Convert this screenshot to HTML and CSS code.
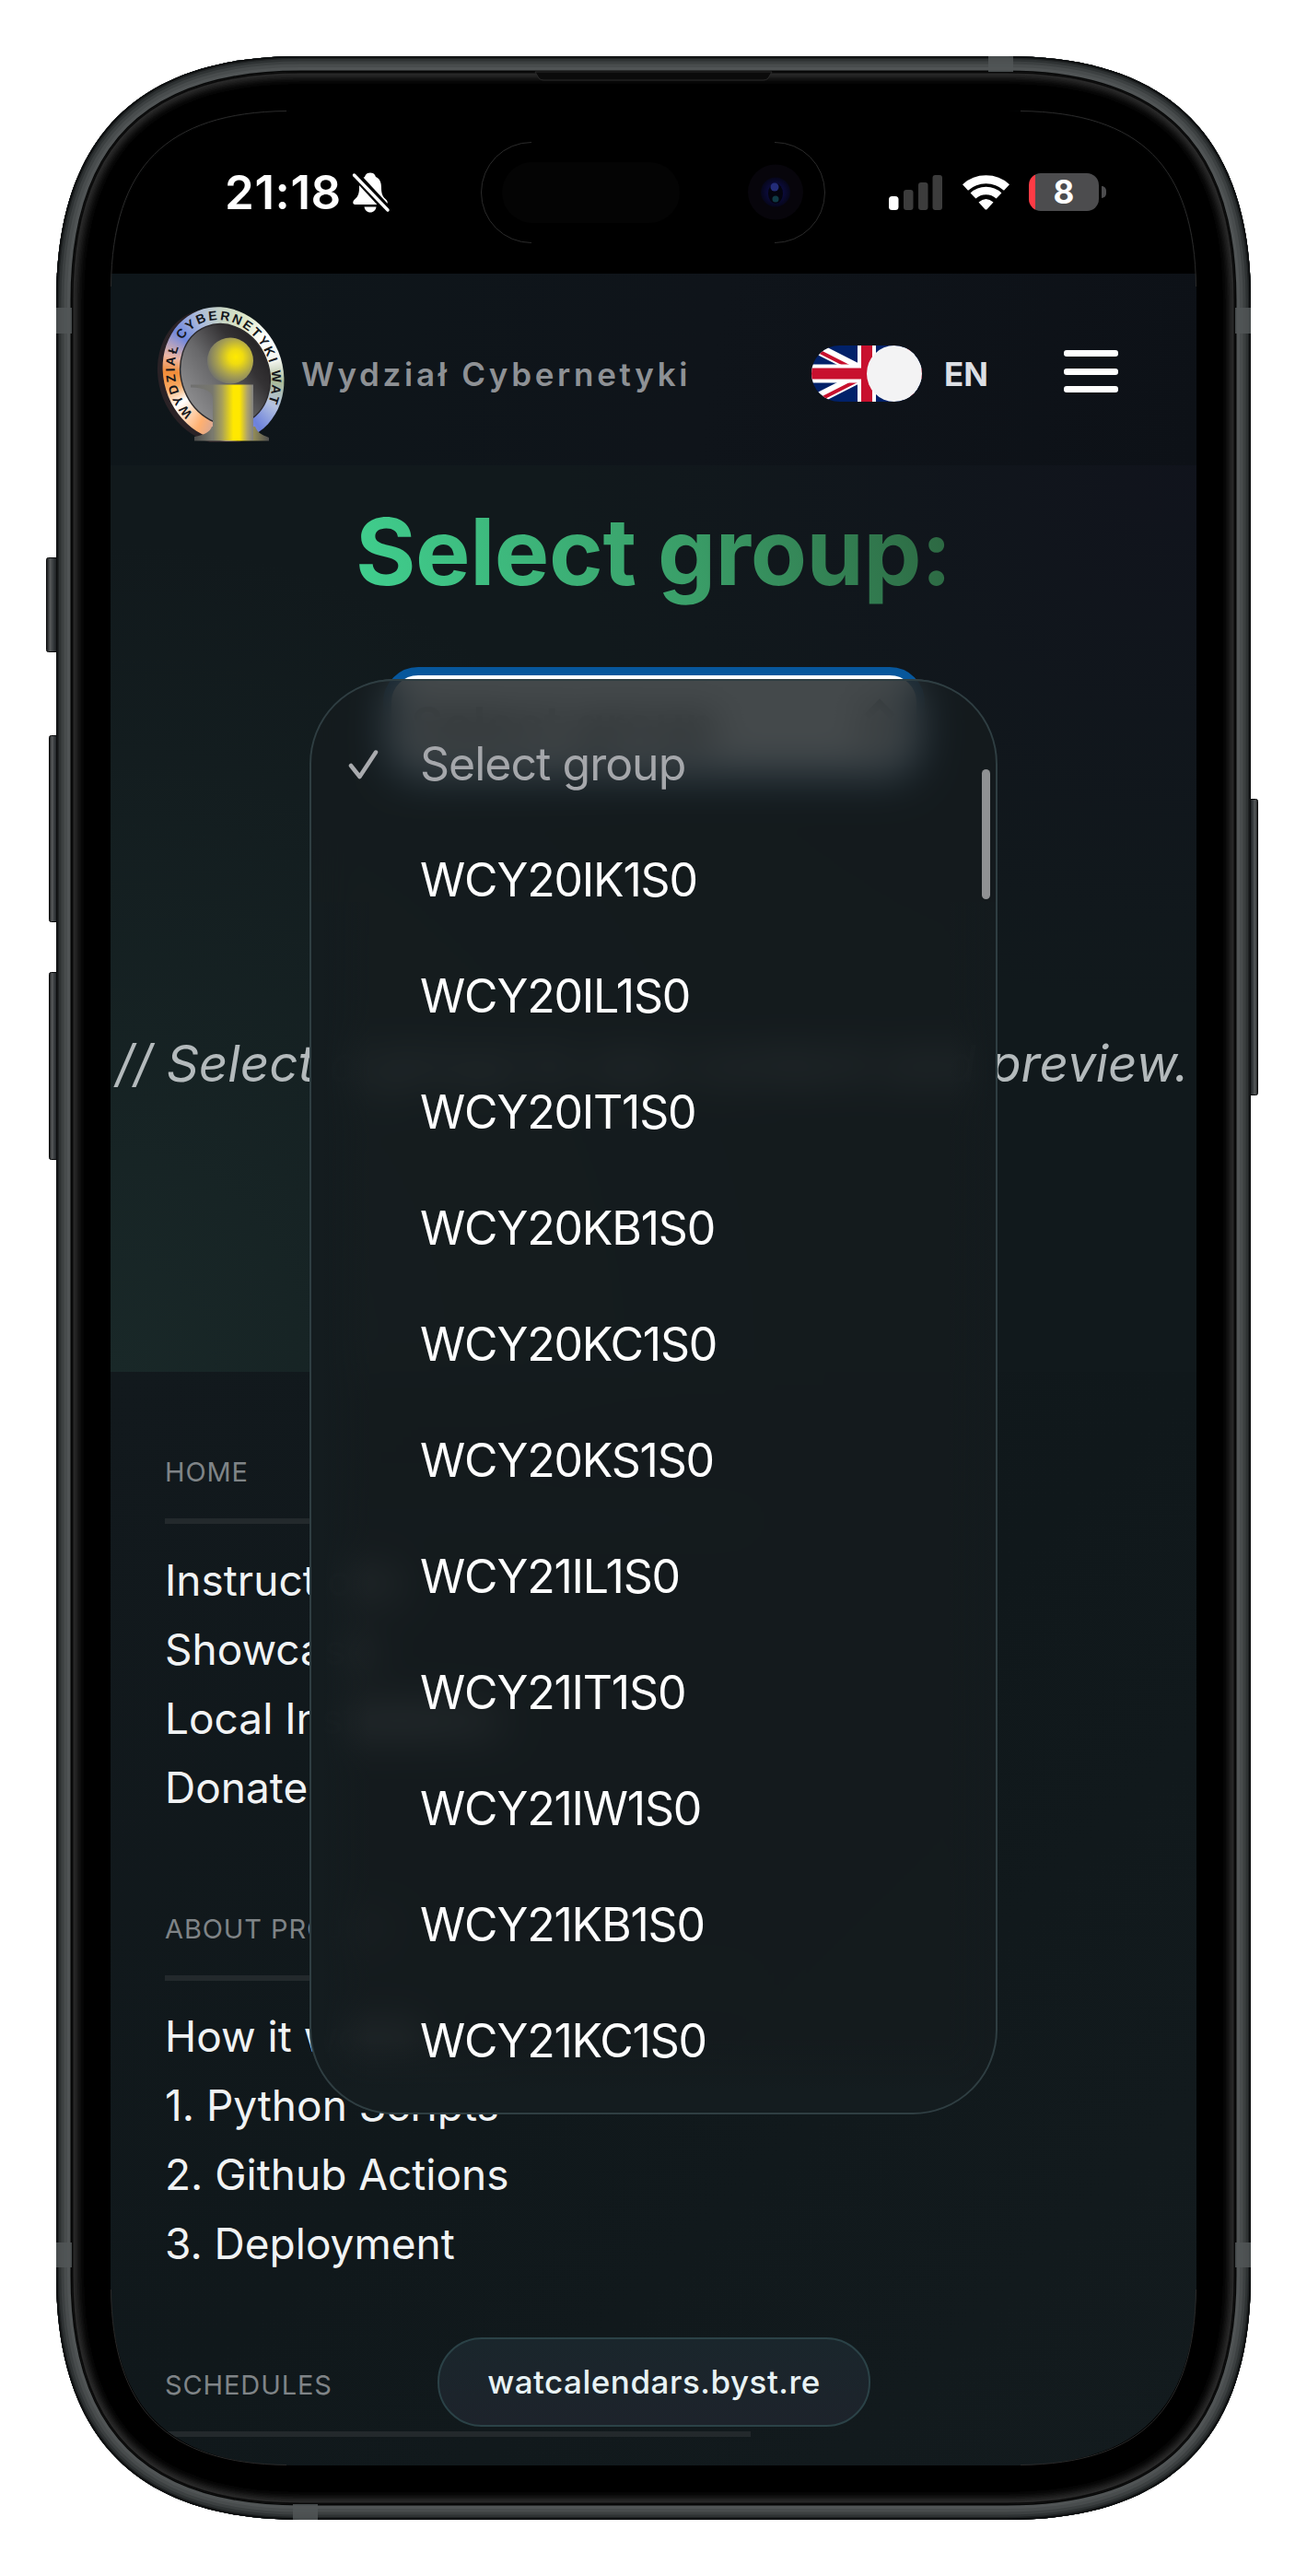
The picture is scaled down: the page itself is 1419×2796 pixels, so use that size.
FILE: index.html
```html
<!DOCTYPE html>
<html lang="en">
<head>
<meta charset="utf-8">
<title>WAT Calendars</title>
<link rel="stylesheet" href="styles.css">
</head>
<body>
<div class="phone">
  <svg class="frame" width="1297" height="2674" viewBox="0 0 1297 2674" aria-hidden="true">
    <defs>
      <path id="outer" d="M265,0H1032C1209,0 1297,88 1297,265V2409C1297,2586 1209,2674 1032,2674H265C88,2674 0,2586 0,2409V265C0,88 88,0 265,0Z"/>
      <path id="inner" d="M265,17H1032C1200,17 1280,97 1280,265V2409C1280,2577 1200,2657 1032,2657H265C97,2657 17,2577 17,2409V265C17,97 97,17 265,17Z"/>
      <clipPath id="outerClip"><use href="#outer"/></clipPath>
      <clipPath id="innerClip"><use href="#inner"/></clipPath>
      <filter id="soft" x="-5%" y="-5%" width="110%" height="110%"><feGaussianBlur stdDeviation="5"/></filter>
      <linearGradient id="btn" x1="0" x2="1" y1="0" y2="0">
        <stop offset="0" stop-color="#141617"/><stop offset=".3" stop-color="#56595a"/><stop offset=".6" stop-color="#33373a"/><stop offset="1" stop-color="#0d0f10"/>
      </linearGradient>
      <linearGradient id="btnR" x1="1" x2="0" y1="0" y2="0">
        <stop offset="0" stop-color="#141617"/><stop offset=".3" stop-color="#56595a"/><stop offset=".6" stop-color="#33373a"/><stop offset="1" stop-color="#0d0f10"/>
      </linearGradient>
      <radialGradient id="lens">
        <stop offset="0" stop-color="#10104a"/><stop offset=".6" stop-color="#0a0a35"/><stop offset="1" stop-color="#06061a"/>
      </radialGradient>
    </defs>
    <g stroke="#0a0b0c" stroke-width="1">
      <rect x="-10.5" y="544.5" width="13" height="102" rx="2" fill="url(#btn)"/>
      <rect x="-7.5" y="737.5" width="10" height="202" rx="2" fill="url(#btn)"/>
      <rect x="-7.5" y="994.5" width="10" height="203" rx="2" fill="url(#btn)"/>
      <rect x="1295" y="806.5" width="9.500" height="321" rx="2" fill="url(#btnR)"/>
    </g>
    <g clip-path="url(#outerClip)" fill="none">
      <use href="#outer" fill="#000" stroke="#060707" stroke-width="36"/>
      <use href="#outer" stroke="#505455" stroke-width="31"/>
      <use href="#outer" stroke="#484c4d" stroke-width="24"/>
      <use href="#outer" stroke="#3c4041" stroke-width="17"/>
      <use href="#outer" stroke="#2e3233" stroke-width="11"/>
      <use href="#outer" stroke="#1e2122" stroke-width="6"/>
      <use href="#outer" stroke="#0c0e0f" stroke-width="3"/>
      <g fill="#515657" opacity=".85">
        <rect x="1012" y="0" width="27" height="17"/>
        <rect x="257" y="2657" width="27" height="17"/>
        <rect x="0" y="273" width="17" height="28"/>
        <rect x="1280" y="273" width="17" height="28"/>
        <rect x="0" y="2373" width="17" height="27"/>
        <rect x="1280" y="2373" width="17" height="27"/>
      </g>
    </g>
    <g clip-path="url(#innerClip)">
      <use href="#inner" fill="#000"/>
      <use href="#inner" fill="none" stroke="#363636" stroke-width="12" filter="url(#soft)"/>
      <use href="#inner" fill="none" stroke="#0a0a0a" stroke-width="3"/>
    </g>
    <path d="M520,17L524,24Q526,26 529,26H768Q771,26 773,24L777,17Z" fill="#0b0b0b" stroke="#2a2a2a" stroke-width="1"/>
  </svg>

  <div class="screen">
    <div class="statusbar">
      <span class="time">21:18</span>
      <svg class="bell" width="42" height="44" viewBox="0 0 42 44" fill="#fff">
        <path d="M20,0.500C15.500,0.500 14.500,3.500 14,5C8.500,7.500 8,13 8,17C8,24 6,27 2.500,30C0.500,32 1,35 3.500,35H36.500C39,35 39.500,32 37.500,30C34,27 32,24 32,17C32,13 31.500,7.500 26,5C25.500,3.500 24.500,0.500 20,0.500Z"/>
        <path d="M13.500,37.500H26.500C26,41 23.500,43.500 20,43.500S14,41 13.500,37.500Z"/>
        <path d="M2.500,1.500L40,42" stroke="#000" stroke-width="9"/>
        <path d="M2.500,3L39,41" stroke="#fff" stroke-width="3.400" stroke-linecap="round"/>
      </svg>
      <div class="indicators">
        <svg width="58" height="38" viewBox="0 0 58 38">
          <rect x="0" y="23" width="10.500" height="15" rx="3.500" fill="#fff"/>
          <g fill="#3c3c3c"><rect x="16" y="16" width="10.500" height="22" rx="3"/><rect x="32" y="8" width="10.500" height="30" rx="3"/><rect x="47.500" y="0" width="10.500" height="38" rx="3"/></g>
        </svg>
        <svg class="wifi" width="51" height="38" viewBox="0 0 51 38" fill="none" stroke="#fff">
          <path d="M3,13.500A33.500,33.500 0 0 1 48,13.500" stroke-width="9"/>
          <path d="M11.500,22.500A20.500,20.500 0 0 1 39.500,22.500" stroke-width="8.500"/>
          <path d="M17.500,29.500Q25.500,22.500 33.500,29.500L26.500,37.200Q25.500,38 24.500,37.200Z" fill="#fff" stroke="none"/>
        </svg>
        <div class="battery"><span>8</span></div>
        <i class="battery-tip"></i>
      </div>
    </div>

    <header class="header">
      <div class="logo">
        <svg width="144" height="148" viewBox="0 0 144 148">
          <defs>
            <linearGradient id="metal" x1="0" x2="1" y1="0" y2="0"><stop offset="0" stop-color="#6f6f6f"/><stop offset=".35" stop-color="#77776e"/><stop offset=".5" stop-color="#a8a05a"/><stop offset=".68" stop-color="#ffe800"/><stop offset=".78" stop-color="#ffe800"/><stop offset=".9" stop-color="#b0a46a"/><stop offset="1" stop-color="#808080"/></linearGradient>
            <radialGradient id="ball" cx=".62" cy=".42" r=".62"><stop offset="0" stop-color="#ffea00"/><stop offset=".25" stop-color="#f0dc10"/><stop offset=".65" stop-color="#aaa24e"/><stop offset="1" stop-color="#77776a"/></radialGradient>
            <linearGradient id="disc" x1="0" x2="1" y1=".6" y2=".3"><stop offset="0" stop-color="#8c8c8e"/><stop offset=".4" stop-color="#68686a"/><stop offset=".75" stop-color="#343234"/><stop offset="1" stop-color="#242224"/></linearGradient>
            <linearGradient id="foot" x1="0" x2="1" y1="0" y2="0"><stop offset="0" stop-color="#4a4a4a"/><stop offset=".35" stop-color="#909080"/><stop offset=".6" stop-color="#ffe800"/><stop offset=".75" stop-color="#a09858"/><stop offset="1" stop-color="#505050"/></linearGradient>
            <path id="ringText" d="M0,61A51.500,61 0 1 1 0.010,61"/>
          </defs>
          <ellipse cx="69" cy="76.500" rx="64.500" ry="75" transform="rotate(-22 69 76.500)" fill="#2a2226"/>
          <foreignObject x="0" y="0" width="144" height="148"><div class="ring"></div></foreignObject>
          <ellipse cx="76.500" cy="74.500" rx="47.500" ry="56" transform="rotate(-22 76.500 74.500)" fill="url(#disc)" stroke="#2c2a2c" stroke-width="1.500"/>
          <g transform="translate(74.500 75) rotate(-22)">
            <text class="ring-label"><textPath href="#ringText" startOffset="61" textLength="254">WYDZIAŁ CYBERNETYKI WAT</textPath></text>
          </g>
          <path d="M43,146.500V142C54,140 60,137 62,131H109C111,137 116,140 124,143V146.500Z" fill="url(#foot)"/>
          <path d="M39,85.500H107V146H63V101Q63,89 39,88.500Z" fill="url(#metal)"/>
          <circle cx="82" cy="59.500" r="25" fill="url(#ball)"/>
        </svg>
      </div>
      <span class="brand">Wydział Cybernetyki</span>
      <div class="controls">
        <div class="toggle">
          <svg width="120" height="61" viewBox="0 0 120 61">
            <clipPath id="tri"><path d="M60,30.500H120V61ZM60,30.500V61H0ZM60,30.500H0V0ZM60,30.500V0H120Z"/></clipPath>
            <rect width="120" height="61" fill="#012169"/>
            <path d="M0,0L120,61M120,0L0,61" stroke="#fff" stroke-width="12"/>
            <path d="M0,0L120,61M120,0L0,61" stroke="#c8102e" stroke-width="8" clip-path="url(#tri)"/>
            <path d="M60,0V61M0,30.500H120" stroke="#fff" stroke-width="20"/>
            <path d="M60,0V61M0,30.500H120" stroke="#c8102e" stroke-width="12"/>
          </svg>
          <i class="knob"></i>
        </div>
        <span class="lang">EN</span>
        <div class="burger"><i></i><i></i><i></i></div>
      </div>
    </header>

    <main class="hero">
      <h1>Select group:</h1>
      <div class="select"><span>Select group</span>
        <svg width="40" height="60" viewBox="0 0 40 60" fill="none" stroke="#222" stroke-width="8"><path d="M6,22L20,8L34,22M6,38L20,52L34,38"/></svg>
      </div>
      <p class="hint">// Select a group to see content and preview.</p>
    </main>

    <footer class="footer">
      <section>
        <h2>HOME</h2>
        <ul><li>Instructions</li><li>Showcase</li><li>Local Installation</li><li>Donate</li></ul>
      </section>
      <section>
        <h2>ABOUT PROJECT</h2>
        <ul><li>How it works</li><li>1. Python Scripts</li><li>2. Github Actions</li><li>3. Deployment</li></ul>
      </section>
      <section>
        <h2>SCHEDULES</h2>
      </section>
    </footer>

    <div class="menu">
      <div class="option current">
        <svg width="33" height="34" viewBox="0 0 33 34" fill="none" stroke="#a9abae" stroke-width="4.500" stroke-linecap="round" stroke-linejoin="round"><path d="M3,18L12.500,30L30,3.500"/></svg>
        <span>Select group</span>
      </div>
      <div class="option">WCY20IK1S0</div>
      <div class="option">WCY20IL1S0</div>
      <div class="option">WCY20IT1S0</div>
      <div class="option">WCY20KB1S0</div>
      <div class="option">WCY20KC1S0</div>
      <div class="option">WCY20KS1S0</div>
      <div class="option">WCY21IL1S0</div>
      <div class="option">WCY21IT1S0</div>
      <div class="option">WCY21IW1S0</div>
      <div class="option">WCY21KB1S0</div>
      <div class="option">WCY21KC1S0</div>
      <i class="scroll-thumb"></i>
    </div>

    <div class="url">watcalendars.byst.re</div>
  </div>

  <svg class="frame" width="1297" height="2674" viewBox="0 0 1297 2674" fill="none" aria-hidden="true">
    <g stroke="#2b2b2b" stroke-width="1">
      <path d="M59.500,250C61,120 120,61 250,59.500M1047,59.500C1177,61 1236,120 1237.500,250M59.500,2424C61,2554 120,2613 250,2614.500M1047,2614.500C1177,2613 1236,2554 1237.500,2424"/>
      <path d="M516,93.500A54.500,54.500 0 0 0 516,202.500M780,93.500A54.500,54.500 0 0 1 780,202.500"/>
    </g>
    <rect x="484" y="115" width="193" height="66" rx="33" fill="#040404"/>
    <circle cx="781" cy="147.500" r="30" fill="#07050b"/>
    <circle cx="781" cy="147.500" r="16" fill="url(#lens)"/>
    <ellipse cx="781" cy="149" rx="8" ry="11" fill="#04040f"/>
    <circle cx="780" cy="142" r="4.500" fill="#232c78"/>
    <circle cx="781" cy="155" r="3.500" fill="#0f3a45"/>
  </svg>
</div>
</body>
</html>
```

FILE: styles.css
```css
* { box-sizing: border-box; margin: 0; padding: 0; }

body {
  background: #fff;
  padding: 61px;
  font-family: Inter, "Liberation Sans", sans-serif;
  color: #f1f3f4;
}

svg { display: block; flex: none; }

.phone { position: relative; width: 1297px; height: 2674px; padding: 59px; }
.frame { position: absolute; top: 0; left: 0; overflow: visible; pointer-events: none; }

.screen {
  position: relative;
  display: flex;
  flex-direction: column;
  width: 1179px;
  height: 2556px;
  background: #12191c;
  clip-path: path("M206,0H973C1118,0 1179,61 1179,206V2350C1179,2495 1118,2556 973,2556H206C61,2556 0,2495 0,2350V206C0,61 61,0 206,0Z");
}

/* status bar */
.statusbar {
  display: flex;
  align-items: center;
  flex: none;
  height: 177px;
  padding: 0 98px 0 124px;
  background: #000;
  color: #fff;
}
.time { font-size: 51px; font-weight: 600; line-height: 60px; letter-spacing: .6px; }
.bell { margin-left: 11px; }
.indicators { display: flex; align-items: center; margin-left: auto; }
.wifi { margin: 0 21px 0 22px; }
.battery {
  display: flex;
  align-items: center;
  justify-content: center;
  width: 76px;
  height: 41px;
  border-radius: 13px;
  background: linear-gradient(90deg, #ff3b45 7px, #4c4c4e 7px);
  font-size: 35px;
  font-weight: 700;
  line-height: 41px;
}
.battery-tip { width: 5px; height: 13px; margin-left: 3px; border-radius: 0 6px 6px 0; background: #4c4c4e; }

/* header */
.header {
  display: flex;
  align-items: center;
  flex: none;
  height: 208px;
  padding: 9px 85px 0 48px;
  background: linear-gradient(100deg, #0e161a, #0f141a 55%, #0d1117);
}
.ring {
  width: 129px;
  height: 148px;
  margin-left: 9.500px;
  border-radius: 50%;
  transform: rotate(-22deg);
  background: conic-gradient(from 22deg, #c9d6c4 0deg, #dfe8c8 22deg, #ffffff 48deg, #f4f6f0 75deg, #a9bb98 98deg, #b4c2e0 122deg, #6d82dc 146deg, #b0a0c0 175deg, #ffb070 205deg, #ffffff 236deg, #f8a860 256deg, #f08c38 272deg, #eeb8a4 288deg, #7088de 312deg, #a9b8dc 335deg, #c9d6c4 360deg);
}
.ring-label { font: 700 14px "Liberation Sans", sans-serif; fill: #15171c; }
.brand {
  margin-left: 15px;
  font-size: 35px;
  font-weight: 600;
  line-height: 44px;
  letter-spacing: 3.700px;
  white-space: nowrap;
  color: #8e9195;
}
.controls { display: flex; align-items: center; margin-left: auto; }
.toggle { position: relative; width: 120px; height: 61px; border-radius: 31px; overflow: hidden; }
.knob { position: absolute; top: 0; right: 0; width: 60px; height: 61px; border-radius: 50%; background: #f3f3f4; }
.lang { width: 48px; margin-left: 24px; font-size: 35px; font-weight: 700; line-height: 44px; color: #dcdfe4; }
.burger { display: flex; flex-direction: column; gap: 12.500px; width: 59px; margin: -5px 0 0 82px; }
.burger i { height: 7px; border-radius: 3px; background: #fff; }

/* group selection */
.hero {
  display: flex;
  flex-direction: column;
  align-items: center;
  flex: none;
  height: 984px;
  padding-top: 33px;
  background:
    radial-gradient(ellipse 700px 600px at 100% 0, rgba(16, 17, 28, .7), rgba(16, 17, 28, 0)),
    radial-gradient(ellipse 800px 900px at 0 100%, #192828, rgba(24, 38, 38, 0)),
    #11191c;
}
h1 {
  font-size: 100px;
  font-weight: 700;
  line-height: 121px;
  letter-spacing: -.4px;
  white-space: nowrap;
  color: transparent;
  background: linear-gradient(75deg, #40d08f, #3a9e68 55%, #2c6540);
  -webkit-background-clip: text;
  background-clip: text;
}
.select {
  display: flex;
  align-items: center;
  justify-content: space-between;
  width: 588px;
  height: 124px;
  margin-top: 65px;
  padding: 0 20px 0 22px;
  border: 9px solid #07579c;
  border-radius: 38px;
  background: #fff;
  color: #222;
  font-size: 54px;
  font-weight: 600;
}
.hint {
  margin: 271px 3px 0 0;
  font-size: 55px;
  font-style: italic;
  line-height: 70px;
  white-space: nowrap;
  letter-spacing: -.04px;
  color: #b4babc;
}

/* footer */
.footer {
  display: flex;
  flex-direction: column;
  gap: 95.500px;
  flex: 1;
  min-height: 0;
  padding: 89px 59px 0;
  background: linear-gradient(135deg, #12191d, #10181b 50%, #131b1e);
}
h2 {
  width: 636px;
  padding-bottom: 30px;
  border-bottom: 6px solid #23292c;
  font-size: 29px;
  font-weight: 400;
  line-height: 40px;
  letter-spacing: .9px;
  color: #7f8487;
}
ul { margin-top: 23.500px; padding-bottom: .5px; list-style: none; }
li { font-size: 46px; line-height: 75px; white-space: nowrap; }

/* native picker */
.menu {
  position: absolute;
  left: 216px;
  top: 617px;
  width: 747px;
  height: 1558px;
  padding: 27px 0 0 118px;
  border: 2px solid #2f3e42;
  border-radius: 92px;
  overflow: hidden;
  background:
    linear-gradient(90deg, #141c1f 12px, rgba(20, 28, 31, 0) 64px) 0 240px no-repeat,
    linear-gradient(270deg, #141b1e 4px, rgba(20, 28, 31, 0) 50px) 0 240px no-repeat,
    linear-gradient(0deg, #141c1f 26px, rgba(20, 28, 31, 0) 80px),
    rgba(21, 28, 30, .8);
  backdrop-filter: blur(22px);
}
.option {
  position: relative;
  height: 126px;
  font-size: 50px;
  line-height: 126px;
  letter-spacing: -1.200px;
  color: #fff;
}
.current { color: #a5a7ab; letter-spacing: -1px; }
.current svg { position: absolute; left: -78px; top: 47px; }
.scroll-thumb { position: absolute; right: 6px; top: 96px; width: 9px; height: 141px; border-radius: 5px; background: #8f9193; }

/* address pill */
.url {
  position: absolute;
  left: 355px;
  top: 2417px;
  width: 470px;
  height: 97px;
  border: 2px solid #2b4247;
  border-radius: 48px;
  background: linear-gradient(#1a262c, #1d232b);
  font-size: 35px;
  font-weight: 500;
  line-height: 93px;
  letter-spacing: .5px;
  text-align: center;
  color: #e8f2f4;
}
```
